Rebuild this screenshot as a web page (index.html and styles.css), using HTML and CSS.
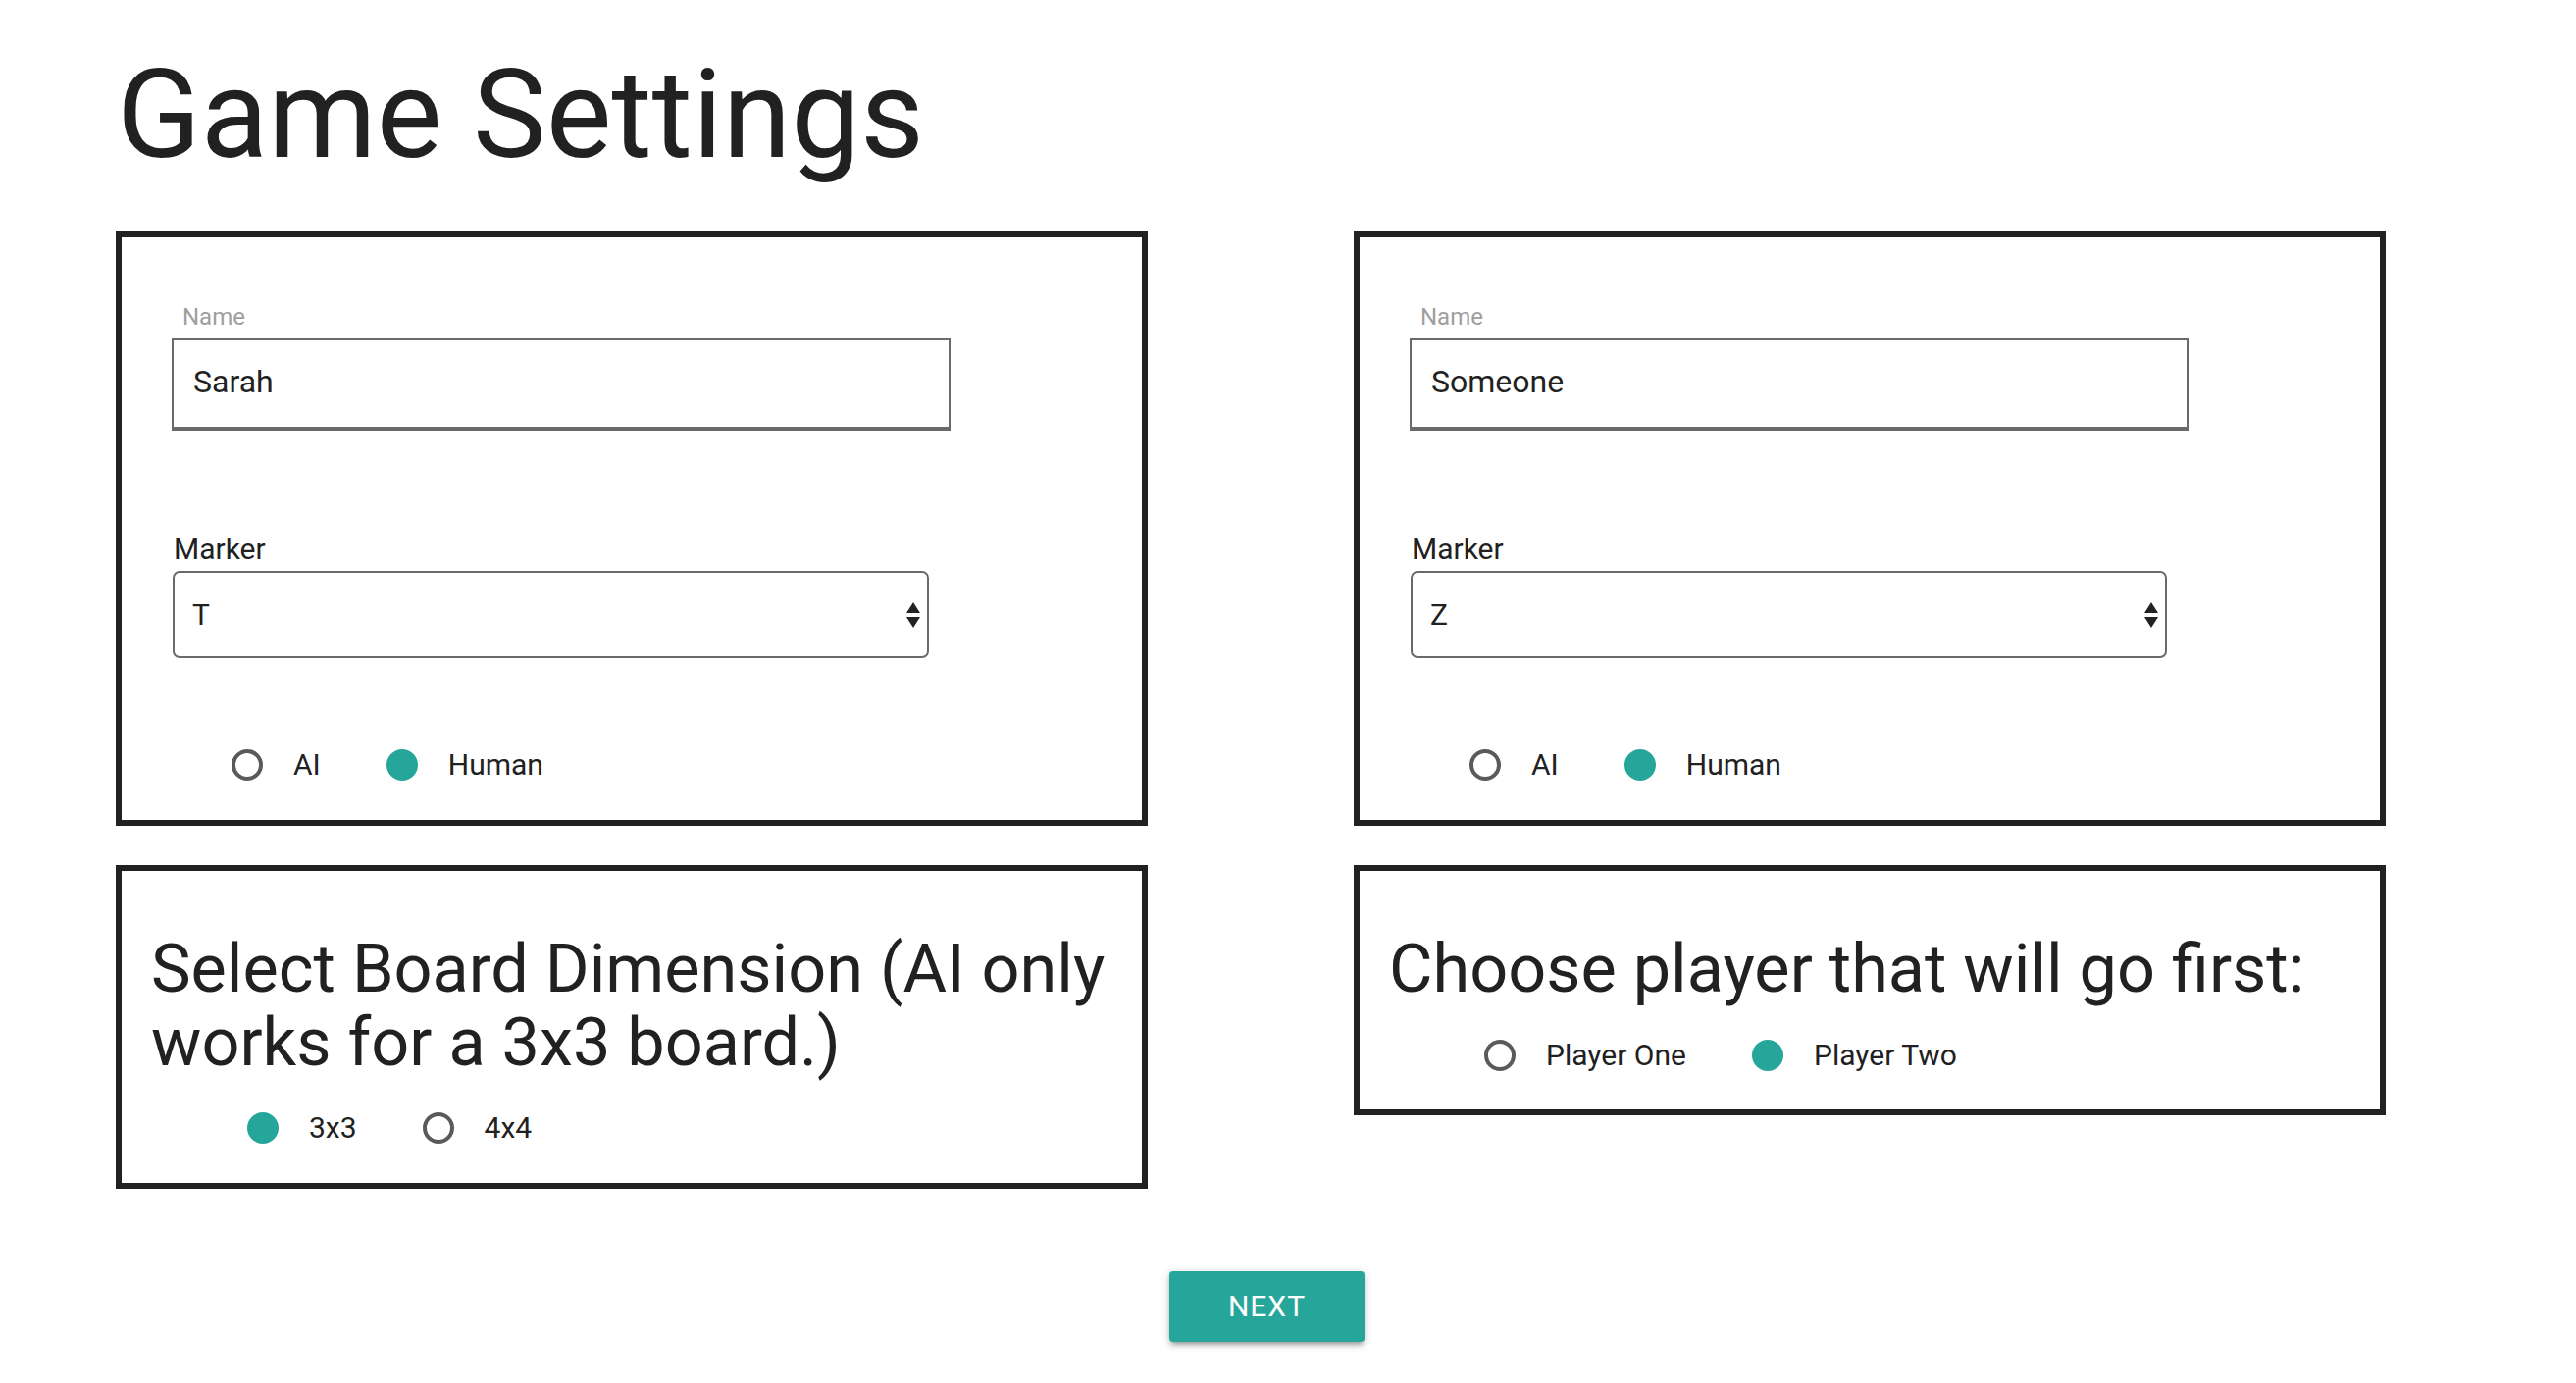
FILE: index.html
```html
<!DOCTYPE html>
<html lang="en">
<head>
<meta charset="utf-8">
<title>Game Settings</title>
<link rel="stylesheet" href="styles.css">
</head>
<body>
<main class="page">
  <h1 class="title">Game Settings</h1>
  <div class="grid">
    <section class="card player-card">
      <label class="field-label" for="name1">Name</label>
      <input class="text-input" id="name1" type="text" value="Sarah">
      <div class="marker-label">Marker</div>
      <div class="select">
        <span class="select-value">T</span>
        <svg class="select-arrows" width="14" height="26" viewBox="0 0 14 26"><polygon points="7,0 14,11 0,11"/><polygon points="0,15 14,15 7,26"/></svg>
      </div>
      <div class="radios radios-player">
        <label class="radio"><span class="circle"></span><span class="radio-text">AI</span></label>
        <label class="radio"><span class="circle checked"></span><span class="radio-text">Human</span></label>
      </div>
    </section>
    <section class="card player-card">
      <label class="field-label" for="name2">Name</label>
      <input class="text-input" id="name2" type="text" value="Someone">
      <div class="marker-label">Marker</div>
      <div class="select">
        <span class="select-value">Z</span>
        <svg class="select-arrows" width="14" height="26" viewBox="0 0 14 26"><polygon points="7,0 14,11 0,11"/><polygon points="0,15 14,15 7,26"/></svg>
      </div>
      <div class="radios radios-player">
        <label class="radio"><span class="circle"></span><span class="radio-text">AI</span></label>
        <label class="radio"><span class="circle checked"></span><span class="radio-text">Human</span></label>
      </div>
    </section>
    <section class="card heading-card">
      <h4 class="card-heading">Select Board Dimension (AI only works for a 3x3 board.)</h4>
      <div class="radios radios-board">
        <label class="radio"><span class="circle checked"></span><span class="radio-text">3x3</span></label>
        <label class="radio"><span class="circle"></span><span class="radio-text">4x4</span></label>
      </div>
    </section>
    <section class="card heading-card heading-card-short">
      <h4 class="card-heading">Choose player that will go first:</h4>
      <div class="radios radios-first">
        <label class="radio"><span class="circle"></span><span class="radio-text">Player One</span></label>
        <label class="radio"><span class="circle checked"></span><span class="radio-text">Player Two</span></label>
      </div>
    </section>
  </div>
  <div class="actions">
    <button class="btn" type="button">NEXT</button>
  </div>
</main>
</body>
</html>
```
FILE: styles.css
```css
* { box-sizing: border-box; }
html, body { margin: 0; padding: 0; background: #fff; }
body {
  font-family: Roboto, "Noto Sans", "Liberation Sans", sans-serif;
  color: #212121;
}
.page {
  padding: 48px 0 0 118px;
}
.title {
  margin: 0 0 50px 1px;
  font-size: 126px;
  line-height: 138px;
  font-weight: 400;
  color: #212121;
}
.grid {
  display: grid;
  grid-template-columns: 1052px 1052px;
  column-gap: 210px;
  row-gap: 40px;
  align-items: start;
}
.card {
  border: 6px solid #212121;
  background: #fff;
}
.player-card {
  display: flex;
  flex-direction: column;
  align-items: flex-start;
  padding: 69px 0 40px 0;
}
.field-label {
  display: block;
  margin: 0 0 10px 62px;
  font-size: 24px;
  line-height: 24px;
  color: #9e9e9e;
}
.text-input {
  display: block;
  margin: 0 0 0 51px;
  width: 794px;
  height: 94px;
  padding: 0 18px 4px 20px;
  border: 2px solid #6a6a6a;
  border-bottom-width: 4px;
  border-radius: 0;
  font-family: Roboto, "Noto Sans", "Liberation Sans", sans-serif;
  font-size: 32px;
  line-height: 32px;
  color: #212121;
  background: #fff;
  outline: none;
  -webkit-appearance: none;
  appearance: none;
}
.marker-label {
  margin: 106px 0 7px 53px;
  font-size: 30px;
  line-height: 30px;
  color: #212121;
}
.select {
  display: flex;
  align-items: center;
  justify-content: space-between;
  margin-left: 52px;
  width: 771px;
  height: 89px;
  padding: 0 7px 0 18px;
  border: 2px solid #6a6a6a;
  border-radius: 7px;
  background: #fff;
}
.select-value {
  font-size: 30px;
  line-height: 30px;
  color: #212121;
}
.select-arrows {
  fill: #222;
  display: block;
}
.radios {
  display: flex;
  align-items: center;
  gap: 67px;
}
.radios-player {
  margin: 93px 0 0 112px;
}
.radio {
  display: flex;
  align-items: center;
  height: 32px;
}
.circle {
  display: block;
  width: 32px;
  height: 32px;
  border: 4px solid #5a5a5a;
  border-radius: 50%;
  margin-right: 31px;
  flex: none;
}
.circle.checked {
  border-color: #26a69a;
  background: #26a69a;
}
.radio-text {
  font-size: 30px;
  line-height: 30px;
  color: #212121;
  white-space: nowrap;
}
.heading-card {
  padding: 63px 8px 40px 30px;
}
.heading-card-short {
  padding-bottom: 39px;
}
.card-heading {
  margin: 0;
  font-size: 68.4px;
  line-height: 75px;
  font-weight: 400;
  color: #212121;
}
.radios-board {
  margin: 33px 0 0 98px;
}
.radios-first {
  margin: 34px 0 0 97px;
}
.actions {
  display: flex;
  padding: 84px 0 40px 1074px;
}
.btn {
  width: 199px;
  height: 72px;
  border: none;
  border-radius: 4px;
  background: #26a69a;
  color: #fff;
  font-family: Roboto, "Noto Sans", "Liberation Sans", sans-serif;
  font-size: 30px;
  line-height: 72px;
  letter-spacing: 1px;
  text-transform: uppercase;
  padding: 0;
  box-shadow: 0 4px 4px 0 rgba(0,0,0,0.14), 0 6px 2px -4px rgba(0,0,0,0.12), 0 2px 10px 0 rgba(0,0,0,0.2);
  cursor: pointer;
}
```
